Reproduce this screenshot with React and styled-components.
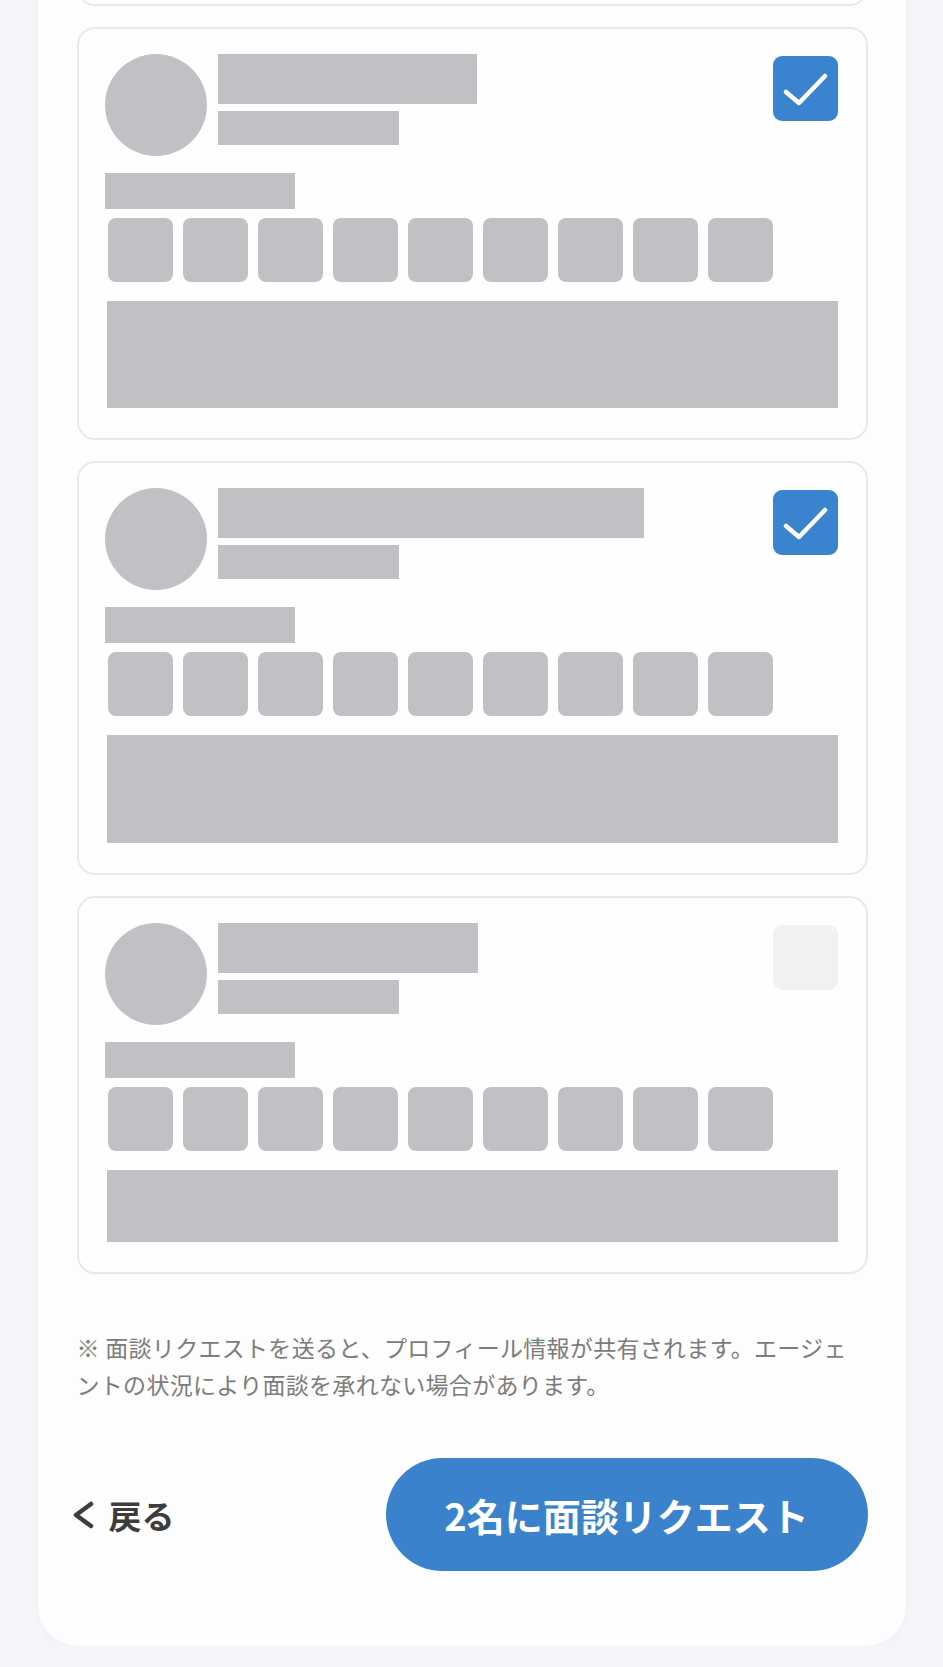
import styled, { createGlobalStyle } from "styled-components";

const GlobalStyle = createGlobalStyle`
  * {
    box-sizing: border-box;
  }

  body {
    margin: 0;
    background-color: #f4f6f9;
    font-family: "Noto Sans CJK JP", "Noto Sans", sans-serif;
  }
`;

const agents = [
  { id: 0, nameWidth: 259, blockHeight: 107, checked: true },
  { id: 1, nameWidth: 259, blockHeight: 107, checked: true },
  { id: 2, nameWidth: 426, blockHeight: 108, checked: true },
  { id: 3, nameWidth: 260, blockHeight: 72, checked: false },
];

const CheckIcon = () => (
  <svg width="65" height="65" viewBox="0 0 65 65" fill="none">
    <polyline
      points="13,36 26,47 52,20"
      stroke="#ffffff"
      strokeWidth="4.5"
      strokeLinecap="round"
      strokeLinejoin="round"
    />
  </svg>
);

const ChevronIcon = () => (
  <svg width="22" height="28" viewBox="0 0 22 28" fill="none">
    <polyline
      points="18,3 3,14 18,25"
      stroke="#3d3d3d"
      strokeWidth="4.5"
      strokeLinecap="round"
      strokeLinejoin="round"
    />
  </svg>
);

const AgentCard = ({ agent }) => {
  return (
    <CardContainer>
      <CardHeader>
        <Avatar />
        <NameBlock>
          <Bar $width={agent.nameWidth} $height={50} />
          <Bar $width={181} $height={34} />
        </NameBlock>
        <CheckBox $checked={agent.checked}>
          {agent.checked && <CheckIcon />}
        </CheckBox>
      </CardHeader>
      <LabelBar />
      <ChipRow>
        {Array.from({ length: 9 }).map((_, i) => (
          <Chip key={i} />
        ))}
      </ChipRow>
      <Summary style={{ height: agent.blockHeight }} />
    </CardContainer>
  );
};

const App = () => {
  const selected = agents.filter((a) => a.id > 0 && a.checked).length;

  return (
    <>
      <GlobalStyle />
      <Panel>
        <CardList>
          {agents.map((agent) => (
            <AgentCard key={agent.id} agent={agent} />
          ))}
        </CardList>
        <Note>
          ※ 面談リクエストを送ると、プロフィール情報が共有されます。エージェントの状況により面談を承れない場合があります。
        </Note>
        <Footer>
          <BackButton>
            <ChevronIcon />
            戻る
          </BackButton>
          <RequestButton>{selected}名に面談リクエスト</RequestButton>
        </Footer>
      </Panel>
    </>
  );
};

export default App;

const Panel = styled.div`
  width: 868px;
  margin: 0 auto;
  padding: 0 38px 75px 39px;
  background-color: #fdfdfd;
  border-radius: 0 0 40px 40px;
  box-shadow: rgba(0, 0, 0, 0.03) 0px 2px 12px;
`;

const CardList = styled.div`
  display: flex;
  flex-direction: column;
  gap: 21px;
  margin-top: -407px;
`;

const CardContainer = styled.div`
  border: 2px solid #e8e9ec;
  border-radius: 18px;
  background-color: #fefefe;
  padding: 25px 28px 30px 26px;
`;

const CardHeader = styled.div`
  display: flex;
  align-items: flex-start;
`;

const Avatar = styled.div`
  width: 102px;
  height: 102px;
  border-radius: 50%;
  background-color: #bfc1c4;
  flex-shrink: 0;
`;

const NameBlock = styled.div`
  display: flex;
  flex-direction: column;
  gap: 7px;
  margin-left: 11px;
  flex: 1;
`;

const Bar = styled.div`
  width: ${(props) => props.$width}px;
  height: ${(props) => props.$height}px;
  background-color: #bfc1c4;
`;

const CheckBox = styled.div`
  width: 65px;
  height: 65px;
  margin-top: 2px;
  border-radius: 9px;
  flex-shrink: 0;
  display: flex;
  background-color: ${(props) => (props.$checked ? "#3a84cf" : "#f0f1f2")};
`;

const LabelBar = styled.div`
  width: 190px;
  height: 36px;
  margin-top: 17px;
  background-color: #bfc1c4;
`;

const ChipRow = styled.div`
  display: flex;
  gap: 10px;
  margin-top: 9px;
  padding-left: 3px;
`;

const Chip = styled.div`
  width: 65px;
  height: 64px;
  border-radius: 8px;
  background-color: #bfc1c4;
`;

const Summary = styled.div`
  width: 731px;
  margin-top: 19px;
  margin-left: 2px;
  background-color: #bfc1c4;
`;

const Note = styled.p`
  margin: 55px 0 0;
  font-size: 23px;
  line-height: 37px;
  letter-spacing: 0.3px;
  color: #7c7c7c;
`;

const Footer = styled.div`
  display: flex;
  align-items: center;
  justify-content: space-between;
  margin-top: 55px;
`;

const BackButton = styled.button`
  display: flex;
  align-items: center;
  gap: 14px;
  padding: 0;
  margin-left: -4px;
  border: none;
  background: none;
  font-family: inherit;
  font-size: 33px;
  font-weight: 700;
  color: #3d3d3d;
  cursor: pointer;
`;

const RequestButton = styled.button`
  width: 482px;
  height: 113px;
  border: none;
  border-radius: 57px;
  background-color: #3a82cc;
  color: #ffffff;
  font-family: inherit;
  font-size: 38px;
  font-weight: 700;
  cursor: pointer;
`;
